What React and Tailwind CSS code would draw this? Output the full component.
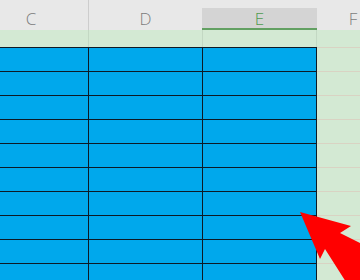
import React from 'react';

const HeaderCell = ({ width, selected, border, children }) => (
  <div className={`${width} h-full flex flex-col ${border}`}>
    <div
      className={`mt-[8px] h-[22px] flex items-center justify-center border-b-2 ${
        selected ? 'bg-[#d4d4d4] border-[#62a062] text-[#4f9a4f]' : 'border-transparent'
      }`}
    >
      {children}
    </div>
  </div>
);

const BodyRow = () => (
  <div className="flex h-[24px] shrink-0">
    <div className="w-[115px] shrink-0 bg-[#00a8ec] border-t border-r border-[#0d1a26]" />
    <div className="w-[114px] shrink-0 bg-[#00a8ec] border-t border-r border-[#0d1a26]" />
    <div className="w-[114px] shrink-0 bg-[#00a8ec] border-t border-r border-[#0d1a26]" />
    <div className="flex-1 border-t border-[#d9d3c3]" />
  </div>
);

export default function App() {
  const rows = Array.from({ length: 10 });

  return (
    <div className="relative w-[360px] h-[280px] overflow-hidden bg-[#d3e9d3] font-['Open_Sans',sans-serif]">
      {/* column headers */}
      <div className="flex -ml-[26px] h-[30px] bg-[#e8e8e8] text-[17px] font-light leading-none text-[#7c7c7c]">
        <HeaderCell width="w-[115px] shrink-0" border="border-r border-[#cdcdcd]">C</HeaderCell>
        <HeaderCell width="w-[113px] shrink-0" border="">D</HeaderCell>
        <HeaderCell width="w-[115px] shrink-0" border="" selected>E</HeaderCell>
        <HeaderCell width="w-[72px] shrink-0" border="">F</HeaderCell>
      </div>

      {/* first (green) row */}
      <div className="flex -ml-[26px] h-[17px]">
        <div className="w-[115px] shrink-0 border-r border-[#c3d8c3]" />
        <div className="w-[114px] shrink-0 border-r border-[#c3d8c3]" />
        <div className="w-[114px] shrink-0 border-r border-[#c3d8c3]" />
      </div>

      {/* blue cells */}
      <div className="flex flex-col -ml-[26px]">
        {rows.map((_, i) => (
          <BodyRow key={i} />
        ))}
      </div>

      {/* red arrow */}
      <svg className="absolute inset-0" width="360" height="280" viewBox="0 0 360 280">
        <polygon
          points="300,212 351,226 340,233 362,244 362,282 346,282 325,249 320,259"
          fill="#ff0000"
        />
      </svg>
    </div>
  );
}
